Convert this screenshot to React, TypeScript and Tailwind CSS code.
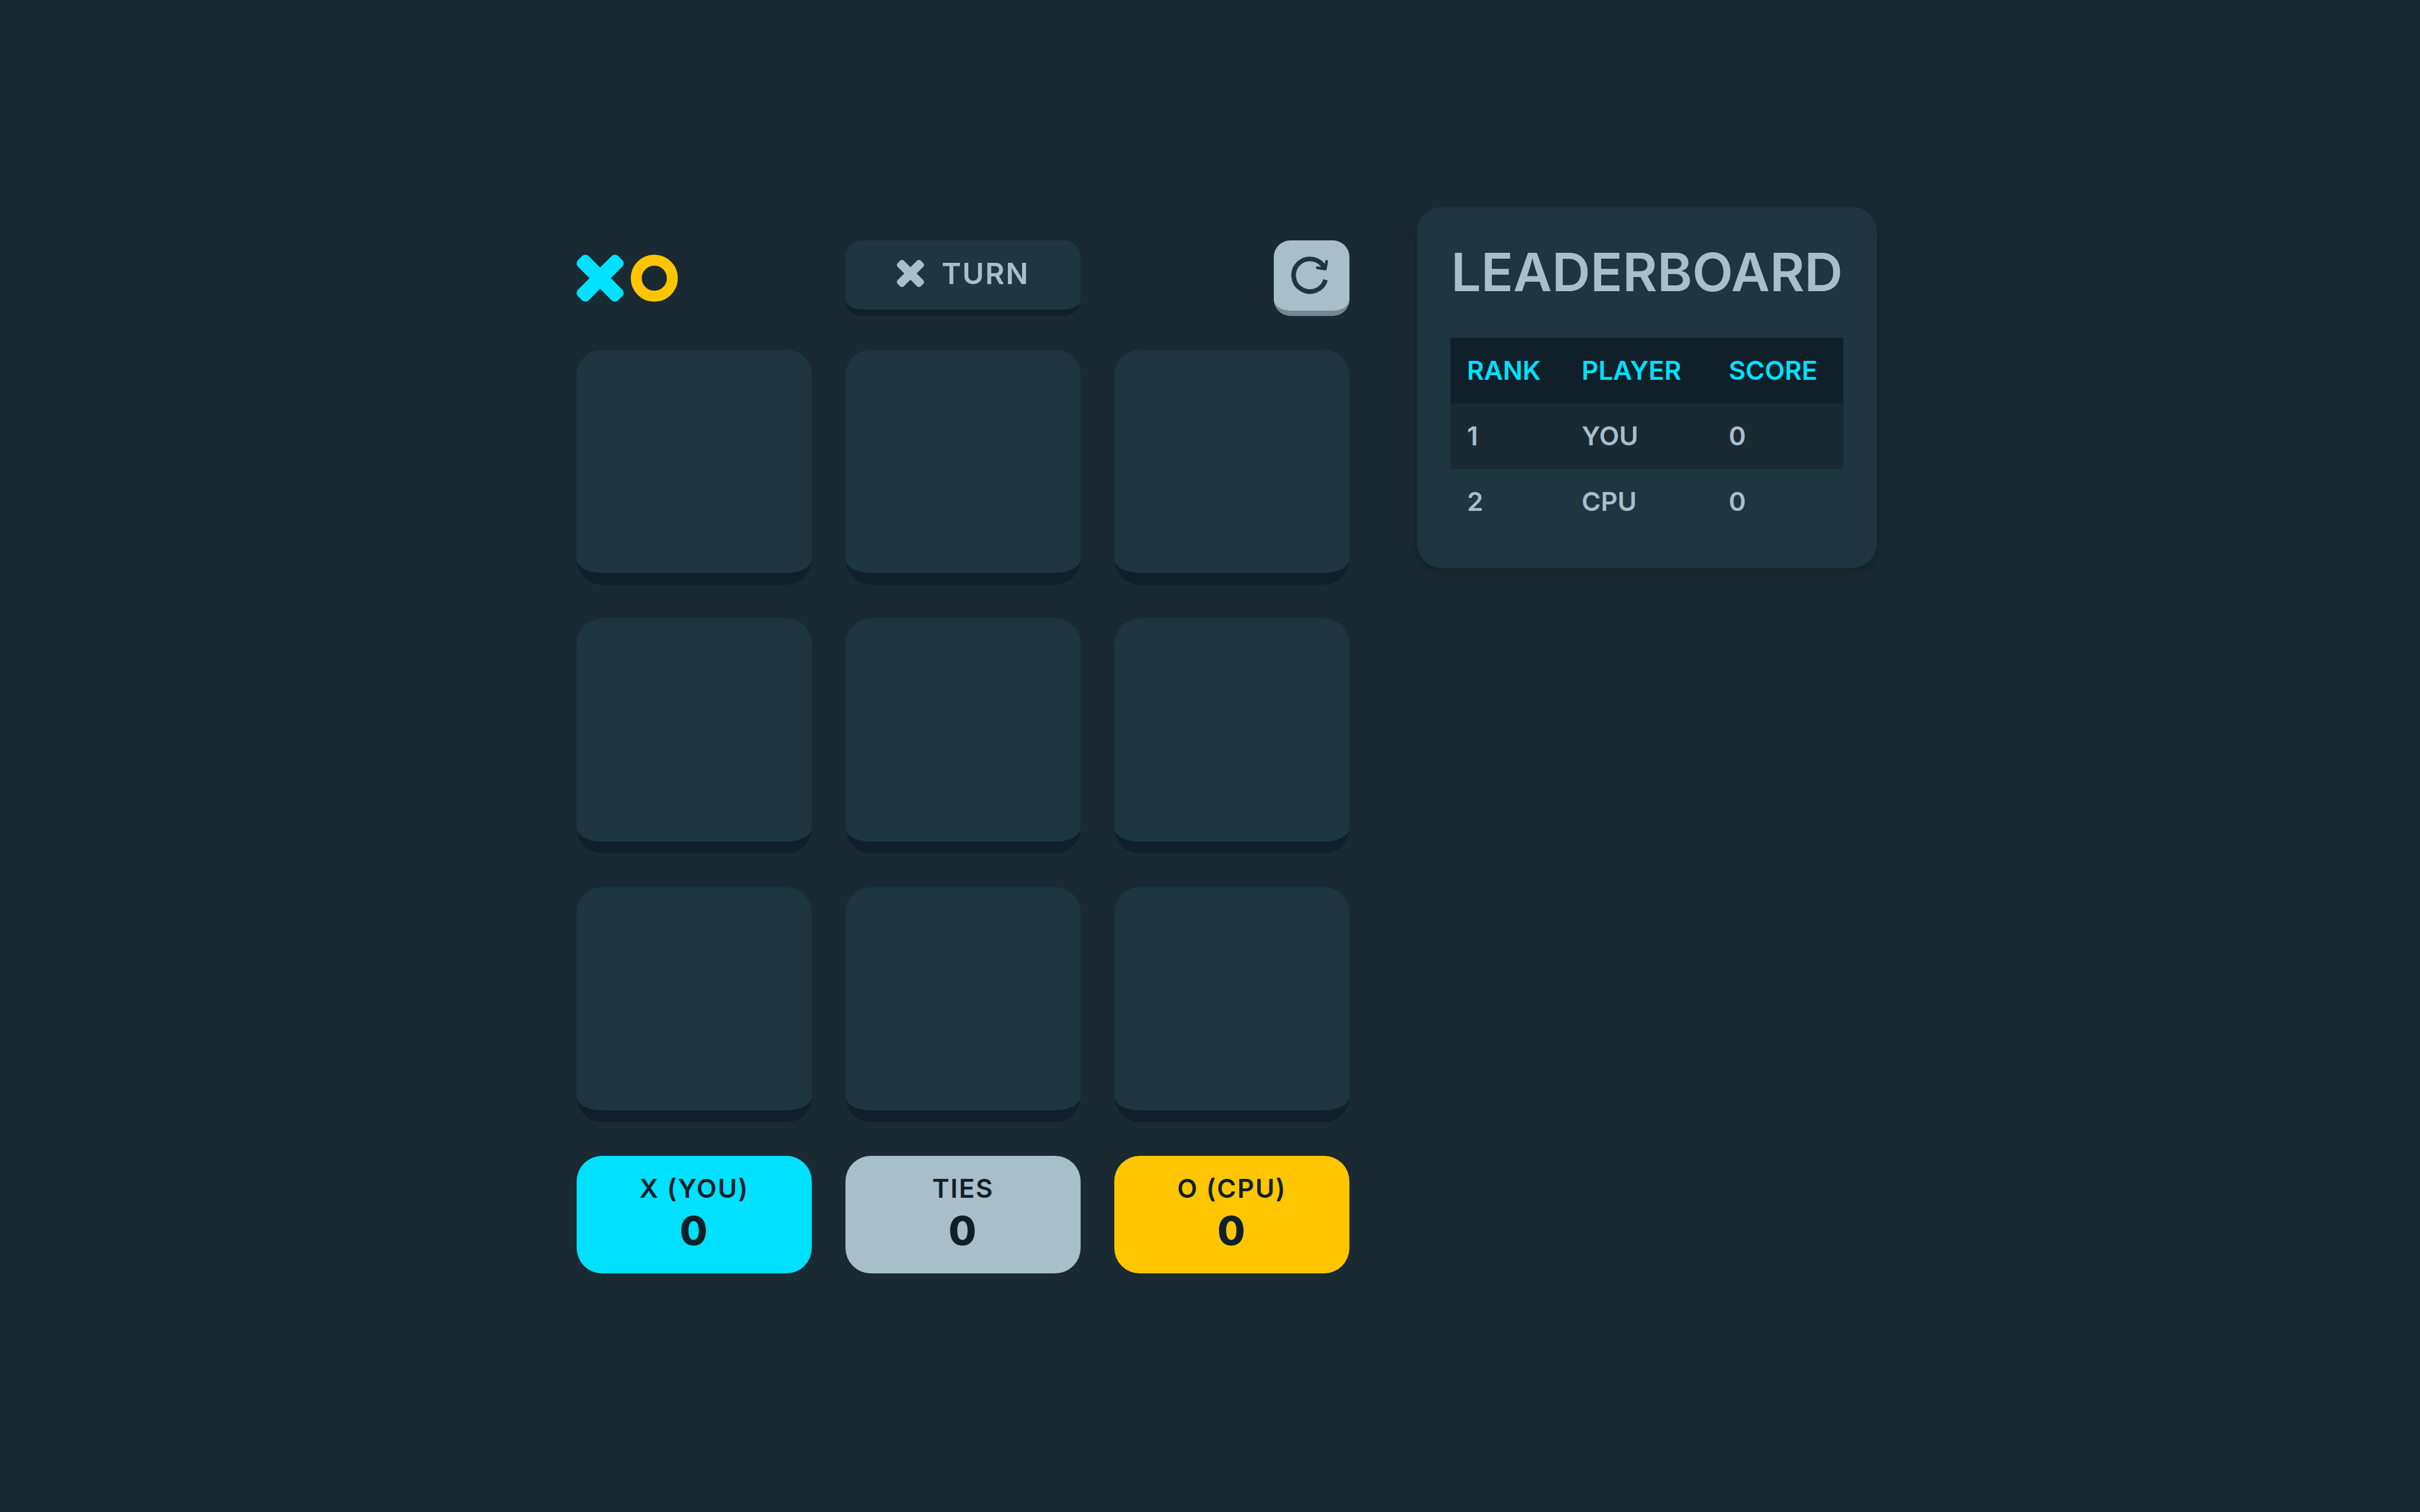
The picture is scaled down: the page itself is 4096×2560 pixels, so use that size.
const X_PATH =
  'M8.562 1.634 16 9.073l7.438-7.439a3 3 0 0 1 4.243 0l2.685 2.685a3 3 0 0 1 0 4.243L22.927 16l7.439 7.438a3 3 0 0 1 0 4.243l-2.685 2.685a3 3 0 0 1-4.243 0L16 22.927l-7.438 7.439a3 3 0 0 1-4.243 0L1.634 27.68a3 3 0 0 1 0-4.243L9.073 16 1.634 8.562a3 3 0 0 1 0-4.243L4.32 1.634a3 3 0 0 1 4.243 0Z';

function Logo() {
  return (
    <svg viewBox="0.75 0.75 65.5 30.5" className="h-20 w-[171px]" role="img" aria-label="XO">
      <path d={X_PATH} fill="#00e1ff" />
      <circle cx="51.1" cy="16" r="11.7" fill="none" stroke="#ffc600" strokeWidth="7.1" />
    </svg>
  );
}

function XMark() {
  return (
    <svg viewBox="0.75 0.75 30.5 30.5" className="size-[46px]" role="img" aria-label="X">
      <path d={X_PATH} fill="currentColor" />
    </svg>
  );
}

function RestartIcon() {
  return (
    <svg viewBox="0 0 225 204" className="h-16 w-[71px]" fill="none" stroke="currentColor" aria-hidden="true">
      <path d="M186 127A88 88 0 1 1 180 62" strokeWidth="25" />
      <path d="M192 27 185 68 142 62" strokeWidth="15" strokeLinecap="round" strokeLinejoin="round" />
      <path d="M185 68 160 60 180 40Z" fill="currentColor" strokeWidth="4" />
    </svg>
  );
}

const CELLS = Array.from({ length: 9 }, (_, i) => i + 1);

const SCORES = [
  { label: 'X (YOU)', value: 0, color: 'bg-[#00e1ff]' },
  { label: 'TIES', value: 0, color: 'bg-[#a8bfc9]' },
  { label: 'O (CPU)', value: 0, color: 'bg-[#ffc600]' },
];

const PLAYERS = [
  { rank: 1, name: 'YOU', score: 0 },
  { rank: 2, name: 'CPU', score: 0 },
];

function Game() {
  return (
    <section className="flex w-full max-w-[1422px] flex-col gap-[57px] p-[57px]">
      <header className="grid grid-cols-3 items-center gap-[57px]">
        <Logo />
        <div className="flex h-32 items-center justify-center gap-[30px] rounded-[28px] border-b-[11px] border-[#0f202a] bg-[#1f3540] pb-1 text-[#a8bfc9]">
          <XMark />
          <span className="text-[50px] font-semibold tracking-[2px]">TURN</span>
        </div>
        <button
          type="button"
          aria-label="Restart"
          className="flex size-32 items-center justify-center justify-self-end rounded-[28px] border-b-[9px] border-[#718993] bg-[#a8bfc9] text-[#1f3540]"
        >
          <RestartIcon />
        </button>
      </header>
      <div className="grid grid-cols-3 gap-[57px]">
        {CELLS.map((n) => (
          <button
            key={n}
            type="button"
            aria-label={`Cell ${n}`}
            className="aspect-square rounded-[43px] border-b-[20px] border-[#0f202a] bg-[#1f3540]"
          />
        ))}
      </div>
      <div className="grid grid-cols-3 gap-[57px] text-[#0f202a]">
        {SCORES.map((s) => (
          <div
            key={s.label}
            className={`flex flex-col items-center gap-1 rounded-[43px] pt-7 pb-8 tracking-[2px] ${s.color}`}
          >
            <span className="text-[44px] leading-[54px] font-semibold">{s.label}</span>
            <span className="text-[68px] leading-[81px] font-extrabold">{s.value}</span>
          </div>
        ))}
      </div>
    </section>
  );
}

function Leaderboard() {
  return (
    <aside className="w-[779px] shrink-0 rounded-[43px] bg-[#1f3540] p-[57px] text-[#a8bfc9] shadow-[0_11px_17px_rgba(0,0,0,0.2)]">
      <h1 className="mb-[57px] text-center text-[90px] leading-[108px] font-semibold whitespace-nowrap">LEADERBOARD</h1>
      <table className="w-full table-fixed text-left text-[44px] leading-[54px]">
        <thead className="bg-[#0f202a] text-[#00e1ff]">
          <tr className="h-[111px]">
            <th scope="col" className="w-[194px] px-7 font-semibold">RANK</th>
            <th scope="col" className="w-[249px] px-7 font-semibold">PLAYER</th>
            <th scope="col" className="px-7 font-semibold">SCORE</th>
          </tr>
        </thead>
        <tbody className="font-semibold">
          {PLAYERS.map((p) => (
            <tr key={p.name} className="h-[111px] odd:bg-[#1a2a33]">
              <td className="px-7">{p.rank}</td>
              <td className="px-7">{p.name}</td>
              <td className="px-7">{p.score}</td>
            </tr>
          ))}
        </tbody>
      </table>
    </aside>
  );
}

export default function App() {
  return (
    <main className="flex min-h-screen items-center justify-center bg-[#1a2a33] pt-0.5 font-[Inter,sans-serif]">
      <div className="flex w-full items-start justify-center gap-[57px]">
        <Game />
        <Leaderboard />
      </div>
    </main>
  );
}
